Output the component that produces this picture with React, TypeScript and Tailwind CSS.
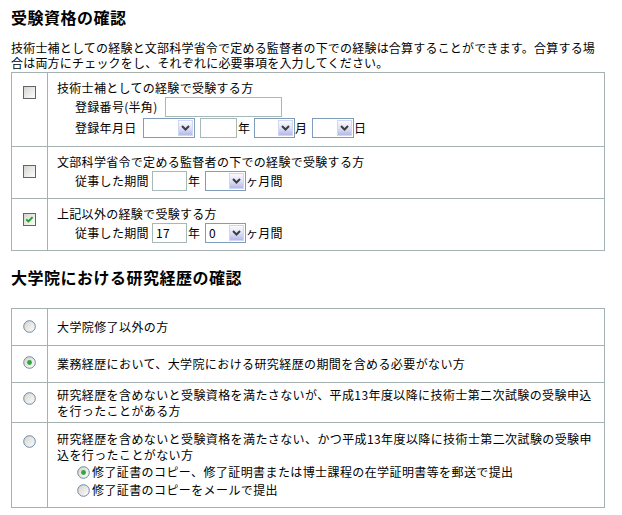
import React from 'react';

// Old XP-style form: two bordered tables with checkbox / radio columns.

function CheckBox({ checked = false }: { checked?: boolean }) {
  return (
    <svg width="13" height="13" viewBox="0 0 13 13" className="block">
      <defs>
        <linearGradient id="cbFill" x1="0" y1="0" x2="1" y2="1">
          <stop offset="0" stopColor="#d3d3cd" />
          <stop offset="1" stopColor="#ffffff" />
        </linearGradient>
      </defs>
      <rect x="0.5" y="0.5" width="12" height="12" fill="url(#cbFill)" stroke="#5f666b" />
      {checked && (
        <path d="M3.3 6.3 L5.4 8.5 L9.6 4.2" fill="none" stroke="#21a121" strokeWidth="1.9" />
      )}
    </svg>
  );
}

function Radio({ checked = false }: { checked?: boolean }) {
  return (
    <svg width="13" height="13" viewBox="0 0 13 13" className="block">
      <defs>
        <linearGradient id="rbFill" x1="0" y1="0" x2="1" y2="1">
          <stop offset="0" stopColor="#d2d2cc" />
          <stop offset="1" stopColor="#ffffff" />
        </linearGradient>
      </defs>
      <circle cx="6.5" cy="6.5" r="5.8" fill="url(#rbFill)" stroke="#6d88a4" strokeWidth="1" />
      {checked && <circle cx="6.5" cy="6.5" r="2.4" fill="#2ea83a" />}
    </svg>
  );
}

function Select({ w, value }: { w: string; value?: string }) {
  return (
    <span className={`flex h-[20px] items-stretch border border-[#7f9db9] bg-white ${w}`}>
      <span className="flex-1 pl-[3px] leading-[18px]">{value}</span>
      <span className="m-[1px] flex w-[15px] items-start justify-center border border-[#d0d6f4] bg-gradient-to-b from-[#fafafd] via-[#e0e2f6] to-[#b4b9e8] pt-[4px]">
        <svg width="9" height="6" viewBox="0 0 9 6" className="block">
          <path d="M1 1 L4.5 4.5 L8 1" stroke="#3d3d3d" strokeWidth="2" fill="none" />
        </svg>
      </span>
    </span>
  );
}

function TextBox({ w, value }: { w: string; value?: string }) {
  return (
    <span className={`block h-[20px] border border-[#a6b8b8] bg-white pl-[3px] leading-[18px] ${w}`}>
      {value}
    </span>
  );
}

export default function App() {
  return (
    <div className="h-[515px] w-[622px] overflow-hidden bg-white pl-[11px] pt-[7px] font-['Noto_Sans_CJK_JP',sans-serif] text-[12px] tracking-[0.3px] text-black">
      {/* 受験資格 */}
      <h2 className="text-[16px] font-bold leading-[20px] tracking-[0.5px]">受験資格の確認</h2>
      <p className="mt-[13px] whitespace-nowrap leading-[15px] tracking-[0.2px]">
        技術士補としての経験と文部科学省令で定める監督者の下での経験は合算することができます。合算する場
        <br />
        合は両方にチェックをし、それぞれに必要事項を入力してください。
      </p>

      <div className="mt-[2px] w-[594px] border border-[#a6b2b2]">
        <div className="flex">
          <div className="flex w-[36px] justify-center border-r border-[#a6b2b2] pt-[13px]">
            <CheckBox />
          </div>
          <div className="flex-1 pb-[8px] pl-[9px] pt-[7px]">
            <div className="leading-[16px]">技術士補としての経験で受験する方</div>
            <div className="flex h-[21px] items-center pl-[18px]">
              <span className="w-[90px]">登録番号(半角)</span>
              <TextBox w="w-[117px]" />
            </div>
            <div className="flex h-[21px] items-center pl-[18px]">
              <span className="w-[68px]">登録年月日</span>
              <Select w="w-[52px]" />
              <span className="ml-[5px]">
                <TextBox w="w-[37px]" />
              </span>
              <span className="ml-[1px] w-[16px]">年</span>
              <Select w="w-[41px]" />
              <span className="w-[17px]">月</span>
              <Select w="w-[42px]" />
              <span>日</span>
            </div>
          </div>
        </div>

        <div className="flex border-t border-[#a6b2b2]">
          <div className="flex w-[36px] justify-center border-r border-[#a6b2b2] pt-[18px]">
            <CheckBox />
          </div>
          <div className="flex-1 pb-[7px] pl-[9px] pt-[7px]">
            <div className="leading-[16px]">文部科学省令で定める監督者の下での経験で受験する方</div>
            <div className="flex h-[21px] items-center pl-[18px]">
              <span className="w-[77px]">従事した期間</span>
              <TextBox w="w-[35px]" />
              <span className="ml-[1px] w-[17px]">年</span>
              <Select w="w-[41px]" />
              <span>ヶ月間</span>
            </div>
          </div>
        </div>

        <div className="flex border-t border-[#a6b2b2]">
          <div className="flex w-[36px] justify-center border-r border-[#a6b2b2] pt-[14px]">
            <CheckBox checked />
          </div>
          <div className="flex-1 pb-[7px] pl-[9px] pt-[7px]">
            <div className="leading-[16px]">上記以外の経験で受験する方</div>
            <div className="flex h-[21px] items-center pl-[18px]">
              <span className="w-[77px]">従事した期間</span>
              <TextBox w="w-[35px]" value="17" />
              <span className="ml-[1px] w-[17px]">年</span>
              <Select w="w-[41px]" value="0" />
              <span>ヶ月間</span>
            </div>
          </div>
        </div>
      </div>

      {/* 大学院 */}
      <h2 className="mt-[16px] text-[16px] font-bold leading-[20px] tracking-[0.5px]">
        大学院における研究経歴の確認
      </h2>

      <div className="mt-[21px] w-[594px] border border-[#a6b2b2] tracking-[0.4px]">
        <div className="flex h-[36px]">
          <div className="flex w-[36px] justify-center border-r border-[#a6b2b2] pt-[11px]">
            <Radio />
          </div>
          <div className="flex flex-1 flex-col justify-center pl-[9px] leading-[16px]">大学院修了以外の方</div>
        </div>

        <div className="flex h-[37px] border-t border-[#a6b2b2]">
          <div className="flex w-[36px] justify-center border-r border-[#a6b2b2] pt-[10px]">
            <Radio checked />
          </div>
          <div className="flex flex-1 flex-col justify-center pl-[9px] leading-[16px]">
            業務経歴において、大学院における研究経歴の期間を含める必要がない方
          </div>
        </div>

        <div className="flex h-[40px] border-t border-[#a6b2b2]">
          <div className="flex w-[36px] justify-center border-r border-[#a6b2b2] pt-[9px]">
            <Radio />
          </div>
          <div className="flex flex-1 flex-col justify-center whitespace-nowrap pl-[9px] leading-[16px]">
            <div>研究経歴を含めないと受験資格を満たさないが、平成13年度以降に技術士第二次試験の受験申込</div>
            <div>を行ったことがある方</div>
          </div>
        </div>

        <div className="flex h-[85px] border-t border-[#a6b2b2]">
          <div className="flex w-[36px] justify-center border-r border-[#a6b2b2] pt-[12px]">
            <Radio />
          </div>
          <div className="flex flex-1 flex-col justify-center whitespace-nowrap pl-[9px] leading-[16px]">
            <div>研究経歴を含めないと受験資格を満たさない、かつ平成13年度以降に技術士第二次試験の受験申</div>
            <div>込を行ったことがない方</div>
            <div className="flex h-[18px] items-center gap-[2px] pl-[20px]">
              <Radio checked />
              <span>修了証書のコピー、修了証明書または博士課程の在学証明書等を郵送で提出</span>
            </div>
            <div className="flex h-[18px] items-center gap-[2px] pl-[20px]">
              <Radio />
              <span>修了証書のコピーをメールで提出</span>
            </div>
          </div>
        </div>
      </div>
    </div>
  );
}
